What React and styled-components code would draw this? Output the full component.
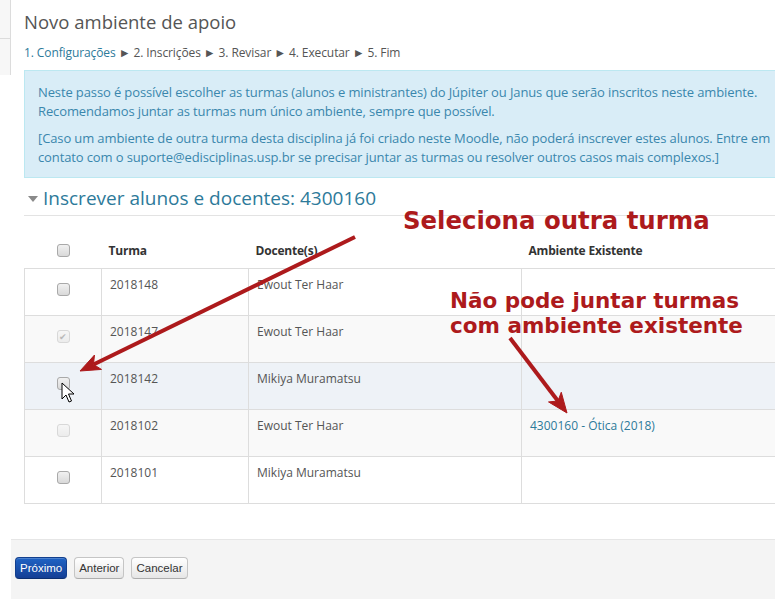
import React from "react";
import styled, { createGlobalStyle } from "styled-components";

const GlobalStyle = createGlobalStyle`
  html, body {
    margin: 0;
    padding: 0;
    background: #fff;
    overflow: hidden;
  }
  body {
    font-family: "Open Sans", "Liberation Sans", sans-serif;
    color: #555;
  }
`;

const Page = styled.div`
  position: relative;
  display: flex;
  width: 810px;
  height: 599px;
`;

const Sidebar = styled.div`
  width: 11px;
  flex-shrink: 0;
  align-self: flex-start;
  display: flex;
  flex-direction: column;
`;

const SideBlock = styled.div`
  height: ${(p) => p.$h}px;
  background: #f7f7f7;
  border-right: 1px solid #dcdcdc;
  border-bottom: ${(p) => (p.$line ? "1px solid #dcdcdc" : "none")};
  box-sizing: border-box;
`;

const Main = styled.div`
  flex: 1;
  display: flex;
  flex-direction: column;
`;

const Content = styled.div`
  padding: 10px 0 0 13px;
`;

const Title = styled.h2`
  margin: 0;
  font-size: 18.5px;
  line-height: 24px;
  font-weight: 400;
  color: #555;
`;

const Steps = styled.div`
  margin-top: 10px;
  font-size: 12px;
  line-height: 18px;
  letter-spacing: -0.1px;
  color: #555;
  white-space: nowrap;
`;

const StepLink = styled.a`
  color: #2d7a9a;
  text-decoration: none;
`;

const InfoBox = styled.div`
  margin-top: 8px;
  background: #d9edf7;
  border: 1px solid #bce8f1;
  padding: 12px 13px 10px;
  color: #3a87ad;
  font-size: 13px;
  line-height: 19px;
  letter-spacing: -0.12px;
`;

const InfoPara = styled.p`
  margin: 0;
  white-space: nowrap;
  & + & {
    margin-top: 8px;
  }
`;

const SectionHeading = styled.h3`
  margin: 8px 0 0;
  padding: 0 0 5px 4px;
  border-bottom: 1px solid #e3e3e3;
  display: flex;
  align-items: center;
  gap: 5px;
  font-size: 19px;
  line-height: 24px;
  font-weight: 400;
  color: #2d7a9a;
`;

const Caret = styled.span`
  width: 0;
  height: 0;
  border-left: 5px solid transparent;
  border-right: 5px solid transparent;
  border-top: 6px solid #8a8a8a;
  margin-top: 2px;
`;

const Table = styled.table`
  margin-top: 16px;
  border-collapse: collapse;
  width: 776px;
  font-size: 12px;
  line-height: 18px;
`;

const HeadCell = styled.th`
  height: 36px;
  box-sizing: border-box;
  padding: 10px 7px 8px;
  text-align: ${(p) => (p.$center ? "center" : "left")};
  vertical-align: top;
  font-weight: 700;
  letter-spacing: -0.2px;
  color: #333;
  width: ${(p) => p.$w}px;
`;

const Row = styled.tr`
  background: ${(p) => p.$bg};
`;

const Cell = styled.td`
  height: 47px;
  box-sizing: border-box;
  border: 1px solid #dddddd;
  padding: 7px 8px;
  vertical-align: top;
  text-align: ${(p) => (p.$center ? "center" : "left")};
  color: #555;
`;

const Box = styled.span`
  display: inline-block;
  width: 11px;
  height: 11px;
  margin-top: ${(p) => p.$mt || 0}px;
  border: 1px solid ${(p) => (p.$disabled ? "#d8d8d8" : "#a9a9a9")};
  border-radius: 3px;
  background: ${(p) =>
    p.$disabled
      ? "linear-gradient(#f6f6f6, #ececec)"
      : "linear-gradient(#f1f1f1, #d9d9d9)"};
  position: relative;
  vertical-align: top;
  font-size: 9px;
  line-height: 11px;
  text-align: center;
  color: #b9b9b9;
`;

const EnvLink = styled.a`
  color: #2d7a9a;
  text-decoration: none;
`;

const Footer = styled.div`
  margin-top: 35px;
  flex: 1;
  background: #f4f4f4;
  border-top: 1px solid #e6e6e6;
  padding: 17px 4px 0;
  display: flex;
  align-items: flex-start;
  gap: 7px;
`;

const Button = styled.button`
  height: 22px;
  padding: 0 4px;
  font-family: "Liberation Sans", Arial, sans-serif;
  font-size: 11.5px;
  border-radius: 4px;
  border: 1px solid ${(p) => (p.$primary ? "#123f8e" : "#c5c5c5")};
  border-bottom-color: ${(p) => (p.$primary ? "#0c2f70" : "#adadad")};
  color: ${(p) => (p.$primary ? "#fff" : "#333")};
  background: ${(p) =>
    p.$primary
      ? "linear-gradient(#1f63c4, #153f95)"
      : "linear-gradient(#ffffff, #e6e6e6)"};
  box-shadow: inset 0 1px 0 rgba(255, 255, 255, 0.2);
`;

const Note = styled.div`
  position: absolute;
  left: ${(p) => p.$x}px;
  top: ${(p) => p.$y}px;
  font-family: "DejaVu Sans", sans-serif;
  font-weight: 700;
  font-size: ${(p) => p.$size}px;
  line-height: ${(p) => p.$lh}px;
  color: #ad1a1c;
  white-space: nowrap;
`;

const Overlay = styled.svg`
  position: absolute;
  left: 0;
  top: 0;
  pointer-events: none;
`;

const rows = [
  { turma: "2018148", doc: "Ewout Ter Haar", bg: "#ffffff" },
  { turma: "2018147", doc: "Ewout Ter Haar", bg: "#f9f9f9", checked: true, disabled: true },
  { turma: "2018142", doc: "Mikiya Muramatsu", bg: "#eef2f7" },
  { turma: "2018102", doc: "Ewout Ter Haar", bg: "#f9f9f9", disabled: true, env: "4300160 - Ótica (2018)" },
  { turma: "2018101", doc: "Mikiya Muramatsu", bg: "#ffffff" },
];

function Arrow({ x1, y1, x2, y2, head = 20, wide = 8 }) {
  const dx = x2 - x1;
  const dy = y2 - y1;
  const len = Math.hypot(dx, dy);
  const ux = dx / len;
  const uy = dy / len;
  const bx = x2 - ux * head;
  const by = y2 - uy * head;
  const nx = -uy * wide;
  const ny = ux * wide;
  const ix = x2 - ux * head * 0.75;
  const iy = y2 - uy * head * 0.75;
  return (
    <g fill="#ad1a1c" stroke="#ad1a1c">
      <line x1={x1} y1={y1} x2={ix} y2={iy} strokeWidth="4" />
      <polygon
        points={`${x2},${y2} ${bx + nx},${by + ny} ${ix},${iy} ${bx - nx},${by - ny}`}
        strokeWidth="1"
      />
    </g>
  );
}

export default function App() {
  return (
    <>
      <GlobalStyle />
      <Page>
        <Sidebar>
          <SideBlock $h={39} $line />
          <SideBlock $h={36} />
        </Sidebar>
        <Main>
          <Content>
            <Title>Novo ambiente de apoio</Title>
            <Steps>
              <StepLink>1. Configurações</StepLink> ► 2. Inscrições ► 3. Revisar ► 4. Executar ► 5. Fim
            </Steps>
            <InfoBox>
              <InfoPara>
                Neste passo é possível escolher as turmas (alunos e ministrantes) do Júpiter ou Janus que serão inscritos neste ambiente.
                <br />
                Recomendamos juntar as turmas num único ambiente, sempre que possível.
              </InfoPara>
              <InfoPara>
                [Caso um ambiente de outra turma desta disciplina já foi criado neste Moodle, não poderá inscrever estes alunos. Entre em
                <br />
                contato com o suporte@edisciplinas.usp.br se precisar juntar as turmas ou resolver outros casos mais complexos.]
              </InfoPara>
            </InfoBox>
            <SectionHeading>
              <Caret />
              Inscrever alunos e docentes: 4300160
            </SectionHeading>
            <Table>
              <thead>
                <tr>
                  <HeadCell $center $w={77}>
                    <Box $mt={2} />
                  </HeadCell>
                  <HeadCell $w={147}>Turma</HeadCell>
                  <HeadCell $w={273}>Docente(s)</HeadCell>
                  <HeadCell>Ambiente Existente</HeadCell>
                </tr>
              </thead>
              <tbody>
                {rows.map((r) => (
                  <Row key={r.turma} $bg={r.bg}>
                    <Cell $center>
                      <Box $mt={7} $disabled={r.disabled}>
                        {r.checked ? "✔" : ""}
                      </Box>
                    </Cell>
                    <Cell>{r.turma}</Cell>
                    <Cell>{r.doc}</Cell>
                    <Cell>{r.env ? <EnvLink>{r.env}</EnvLink> : null}</Cell>
                  </Row>
                ))}
              </tbody>
            </Table>
          </Content>
          <Footer>
            <Button $primary>Próximo</Button>
            <Button>Anterior</Button>
            <Button>Cancelar</Button>
          </Footer>
        </Main>

        <Note $x={403} $y={209} $size={24.4} $lh={24}>
          Seleciona outra turma
        </Note>
        <Note $x={450} $y={288} $size={21.5} $lh={25}>
          Não pode juntar turmas
          <br />
          com ambiente existente
        </Note>

        <Overlay width="810" height="599" viewBox="0 0 810 599">
          <Arrow x1={355} y1={237} x2={80} y2={371} />
          <Arrow x1={510} y1={338} x2={567} y2={413} />
          <path
            d="M62 383 L62 399 L66 395 L69 402 L71.5 401 L68.5 394 L74 394 Z"
            fill="#fff"
            stroke="#000"
            strokeWidth="1"
            strokeLinejoin="round"
          />
        </Overlay>
      </Page>
    </>
  );
}
